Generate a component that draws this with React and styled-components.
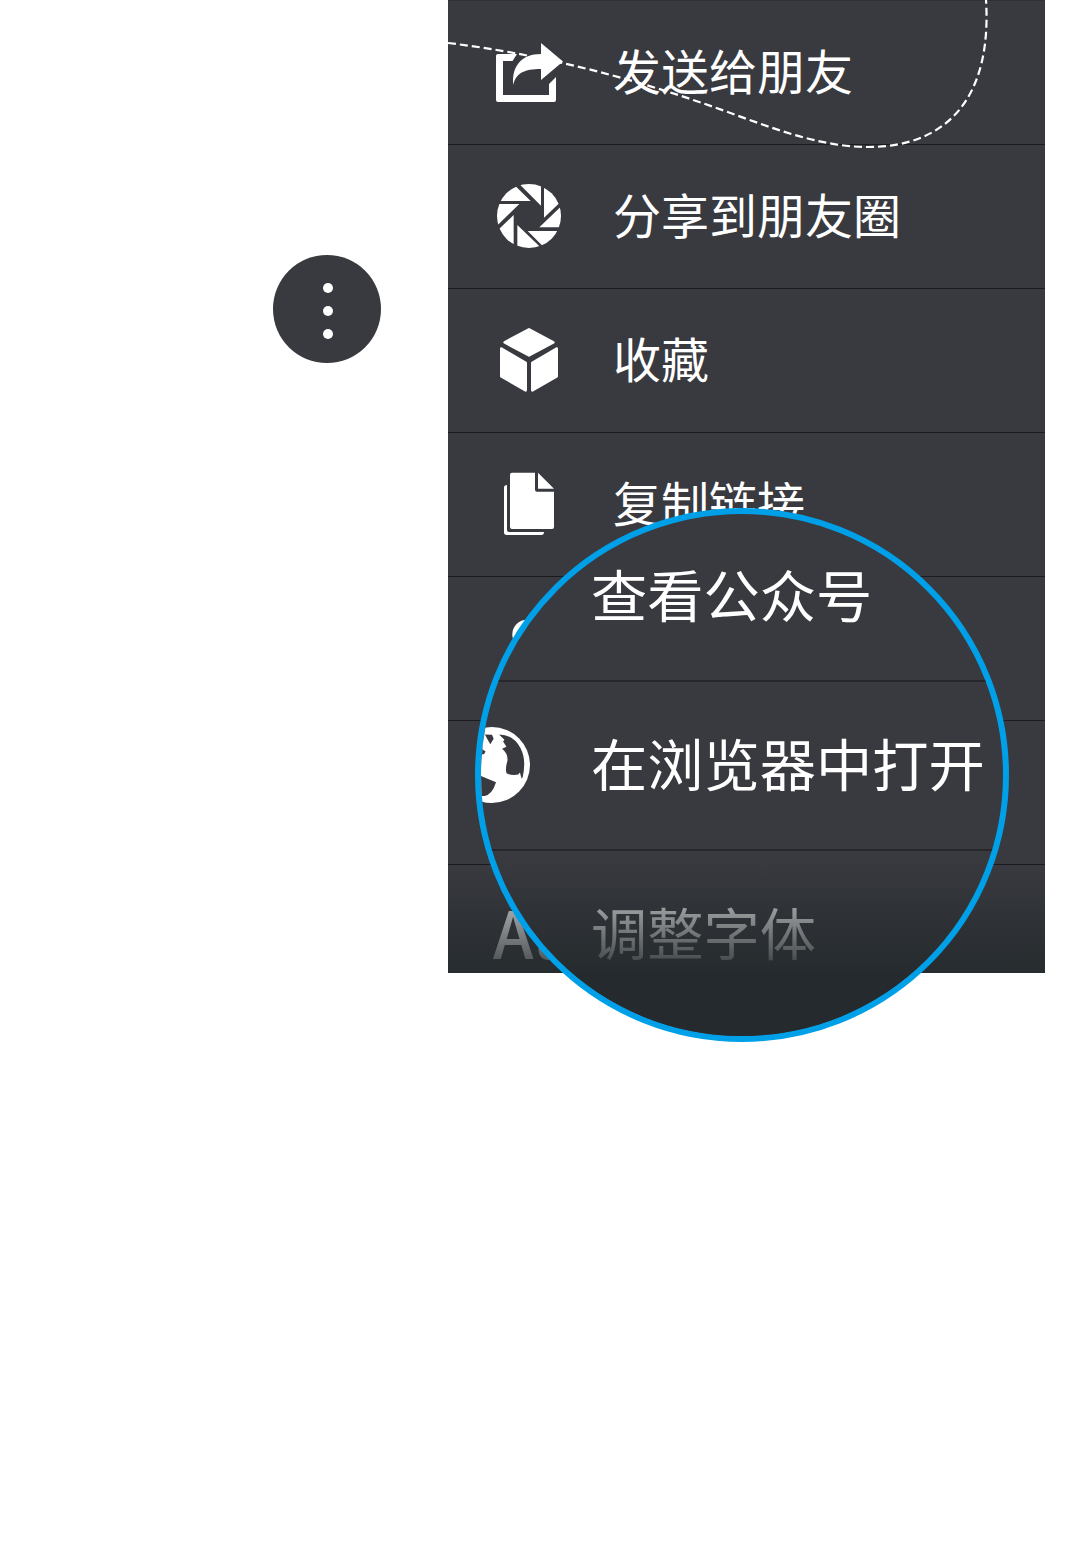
import React from "react";
import styled, { createGlobalStyle } from "styled-components";

const Global = createGlobalStyle`
  html, body { margin: 0; background: #fff; }
  body { font-family: "Noto Sans CJK SC", "Noto Sans", sans-serif; }
`;

const Page = styled.main`
  box-sizing: border-box;
  width: 1080px;
  height: 1560px;
  padding-right: 35px;
  display: flex;
  justify-content: flex-end;
  align-items: flex-start;
  gap: 67px;
  overflow: hidden;
  background: #fff;
`;

const MoreButton = styled.button`
  width: 108px;
  height: 108px;
  margin: 255px 0 0;
  padding: 4px 0 0 2px;
  box-sizing: border-box;
  border: 0;
  border-radius: 50%;
  background: #393a3f;
  display: flex;
  flex-direction: column;
  align-items: center;
  justify-content: center;
  gap: 13px;
`;

const Dot = styled.span`
  width: 10px;
  height: 10px;
  border-radius: 50%;
  background: #fff;
`;

const Stage = styled.section`
  position: relative;
  width: 597px;
`;

const Menu = styled.ul`
  position: relative;
  list-style: none;
  margin: 0;
  padding: 0;
  height: 973px;
  overflow: hidden;
  background: #393a3f;
`;

const Row = styled.li`
  box-sizing: border-box;
  height: ${(p) => (p.$short ? 109 : 144)}px;
  padding: 35px 0 0 44px;
  border-top: 1px solid ${(p) => (p.$first ? "#303034" : "#1c1c20")};
  display: flex;
  align-items: flex-start;
  gap: 49px;
`;

const Icon = styled.svg`
  width: 72px;
  height: 72px;
  flex: none;
  display: block;
  fill: #fff;
`;

const Label = styled.span`
  color: #fff;
  font-size: 48px;
  line-height: 66px;
  white-space: nowrap;
`;

const Letters = styled.span`
  color: #fff;
  font-size: 65px;
  font-weight: 500;
  line-height: 62px;
  margin-left: 1px;
`;

const Fade = styled.div`
  position: absolute;
  left: 0;
  right: 0;
  top: ${(p) => p.$top}px;
  bottom: 0;
  background: linear-gradient(
    rgba(36, 42, 45, 0),
    rgba(36, 42, 45, 0.44) 46px,
    rgba(36, 42, 45, 0.8) 97px,
    rgb(36, 42, 45) 118px
  );
`;

const Trail = styled.svg`
  position: absolute;
  left: 0;
  top: 0;
  width: 597px;
  height: 160px;
  fill: none;
  stroke: #fff;
  stroke-width: 2.2;
  stroke-dasharray: 8 4;
`;

const Lens = styled.div`
  position: absolute;
  box-sizing: border-box;
  left: 27px;
  top: 508px;
  width: 534px;
  height: 534px;
  border: 6px solid #00a0e9;
  border-radius: 50%;
  overflow: hidden;
  background: #393a3f;
`;

const LensRow = styled.div`
  position: relative;
  box-sizing: border-box;
  height: ${(p) => p.$height}px;
  border-bottom: ${(p) => (p.$last ? 0 : "2px solid #27272b")};
  padding: 0 0 8px 110px;
  display: flex;
  align-items: center;
`;

const LensLabel = styled.span`
  color: #fff;
  font-size: 56.25px;
  line-height: 80px;
  white-space: nowrap;
`;

const Globe = styled.svg`
  position: absolute;
  left: -27px;
  top: 45px;
  width: 76px;
  height: 76px;
`;

function ShareIcon() {
  return (
    <Icon viewBox="0 0 72 72">
      <path d="M6 18H25L20.5 25H11V59H57V48L64 41V64Q64 66 62 66H6Q4 66 4 64V20Q4 18 6 18Z" />
      <path d="M49 7L71 25.5L49 44V33C32 33 24 37 21.3 49C19.5 31 29 18 49 18Z" />
    </Icon>
  );
}

function ApertureIcon() {
  return (
    <Icon viewBox="36 30 216 216">
      <clipPath id="aperture"><circle cx="147" cy="138" r="96" /></clipPath>
      <g clipPath="url(#aperture)">
        <path d="M183 107L113 37H183ZM192 143V30H260V78ZM178 172L250 103V172ZM143 183H240V240H200Z" />
        <path d="M112 165V240H190ZM101 135V240H30V203ZM118 102H40V178ZM152 93H50V40H98Z" />
      </g>
    </Icon>
  );
}

function CubeIcon() {
  return (
    <Icon viewBox="36 27 216 216" stroke="#fff" strokeWidth="8" strokeLinejoin="round">
      <path d="M147 43L220 82L147 121L74 82ZM64 101L137 144V226L64 184ZM230 101L157 144V226L230 184Z" />
    </Icon>
  );
}

function CopyIcon() {
  return (
    <Icon viewBox="6 24 216 216">
      <path d="M66 38H135V89Q135 95 141 95H192V201Q192 207 186 207H66Q60 207 60 201V44Q60 38 66 38Z" />
      <path d="M144 38L192 86H144ZM51 75V210Q51 216 57 216H162Q162 225 154 225H50Q42 225 42 217V83Q42 75 51 75Z" />
    </Icon>
  );
}

function PersonIcon() {
  return (
    <Icon viewBox="0 0 72 72">
      <circle cx="35" cy="22.5" r="14.7" />
    </Icon>
  );
}

const items = [
  { label: "发送给朋友", Glyph: ShareIcon },
  { label: "分享到朋友圈", Glyph: ApertureIcon },
  { label: "收藏", Glyph: CubeIcon },
  { label: "复制链接", Glyph: CopyIcon },
];

export default function App() {
  return (
    <>
      <Global />
      <Page>
        <MoreButton aria-label="more">
          <Dot />
          <Dot />
          <Dot />
        </MoreButton>
        <Stage>
          <Menu>
            {items.map(({ label, Glyph }, i) => (
              <Row key={label} $first={i === 0}>
                <Glyph />
                <Label>{label}</Label>
              </Row>
            ))}
            <Row><PersonIcon /></Row>
            <Row />
            <Row $short><Letters>Aa</Letters></Row>
            <Fade $top={866} />
          </Menu>
          <Trail viewBox="0 0 597 160">
            <path d="M0 43C85 53 173 75 255 103.3C310 122 365 147 420 147C500 147 544 97 538 0" />
          </Trail>
          <Lens>
            <LensRow $height={168}><LensLabel>查看公众号</LensLabel></LensRow>
            <LensRow $height={169}>
              <Globe viewBox="-46 382 226 226">
                <circle cx="67" cy="495" r="113" fill="#fff" />
                <path
                  fill="#393a3f"
                  d="M88 404Q130 404 152 445Q170 480 158 532L155 535L150 517L145 523Q127 527 111 520Q105 509 113 482Q115 462 97 447L110 441L100 425L104 420ZM46 404L67 405L72 417L62 433L53 418ZM30 442L48 455L43 463H30ZM30 526L79 546Q68 582 45 587H30Z"
                />
              </Globe>
              <LensLabel>在浏览器中打开</LensLabel>
            </LensRow>
            <LensRow $height={168} $last><LensLabel>调整字体</LensLabel></LensRow>
            <Fade $top={345} />
          </Lens>
        </Stage>
      </Page>
    </>
  );
}
